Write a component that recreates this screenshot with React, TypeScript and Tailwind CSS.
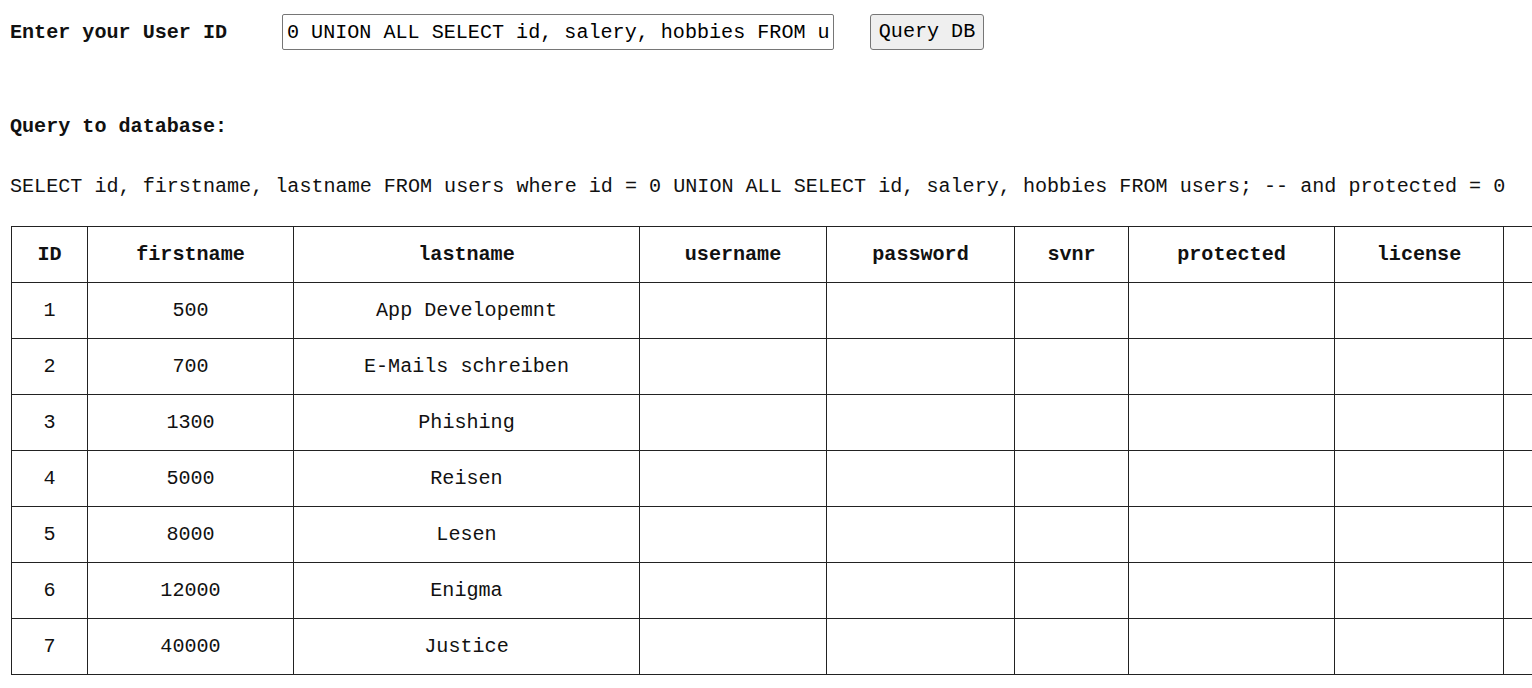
import React from 'react';

const columns = [
  { label: 'ID', width: 'w-[76px]' },
  { label: 'firstname', width: 'w-[206px]' },
  { label: 'lastname', width: 'w-[346px]' },
  { label: 'username', width: 'w-[187px]' },
  { label: 'password', width: 'w-[188px]' },
  { label: 'svnr', width: 'w-[114px]' },
  { label: 'protected', width: 'w-[206px]' },
  { label: 'license', width: 'w-[169px]' },
  { label: '', width: 'w-[200px]' },
];

const rows = [
  { id: 1, salery: '500', hobbies: 'App Developemnt' },
  { id: 2, salery: '700', hobbies: 'E-Mails schreiben' },
  { id: 3, salery: '1300', hobbies: 'Phishing' },
  { id: 4, salery: '5000', hobbies: 'Reisen' },
  { id: 5, salery: '8000', hobbies: 'Lesen' },
  { id: 6, salery: '12000', hobbies: 'Enigma' },
  { id: 7, salery: '40000', hobbies: 'Justice' },
];

const query =
  'SELECT id, firstname, lastname FROM users where id = 0 UNION ALL SELECT id, salery, hobbies FROM users; -- and protected = 0';

export default function App() {
  return (
    <div className="w-full min-h-[688px] overflow-hidden bg-white pl-[10px] pt-[14px] text-[20.1px] leading-6 text-[#111] font-['Liberation_Mono',monospace]">
      <div className="flex h-9 items-center">
        <label className="w-[272px] pt-[2px] font-bold">Enter your User ID</label>
        <input
          type="text"
          defaultValue="0 UNION ALL SELECT id, salery, hobbies FROM users; --"
          className="h-9 w-[552px] rounded-[2px] border border-[#767676] bg-white px-[4px] text-[20.1px] text-black outline-none"
        />
        <button className="ml-[36px] h-9 w-[114px] rounded-[3px] border border-[#767676] bg-[#efefef] text-[20.1px] text-black">
          Query DB
        </button>
      </div>

      <h3 className="mt-[65px] font-bold">Query to database:</h3>
      <p className="mt-[36px] whitespace-nowrap">{query}</p>

      <table className="mt-[27px] ml-[1px] w-[1692px] table-fixed border-collapse">
        <colgroup>
          {columns.map((c, i) => (
            <col key={i} className={c.width} />
          ))}
        </colgroup>
        <thead>
          <tr>
            {columns.map((c, i) => (
              <th key={i} className="h-[56px] border border-[#222] p-0 text-center align-middle font-bold">
                {c.label}
              </th>
            ))}
          </tr>
        </thead>
        <tbody>
          {rows.map((r) => (
            <tr key={r.id}>
              <td className="h-[56px] border border-[#222] p-0 text-center align-middle">{r.id}</td>
              <td className="border border-[#222] p-0 text-center align-middle">{r.salery}</td>
              <td className="border border-[#222] p-0 text-center align-middle">{r.hobbies}</td>
              {columns.slice(3).map((_, i) => (
                <td key={i} className="border border-[#222] p-0" />
              ))}
            </tr>
          ))}
        </tbody>
      </table>
    </div>
  );
}
